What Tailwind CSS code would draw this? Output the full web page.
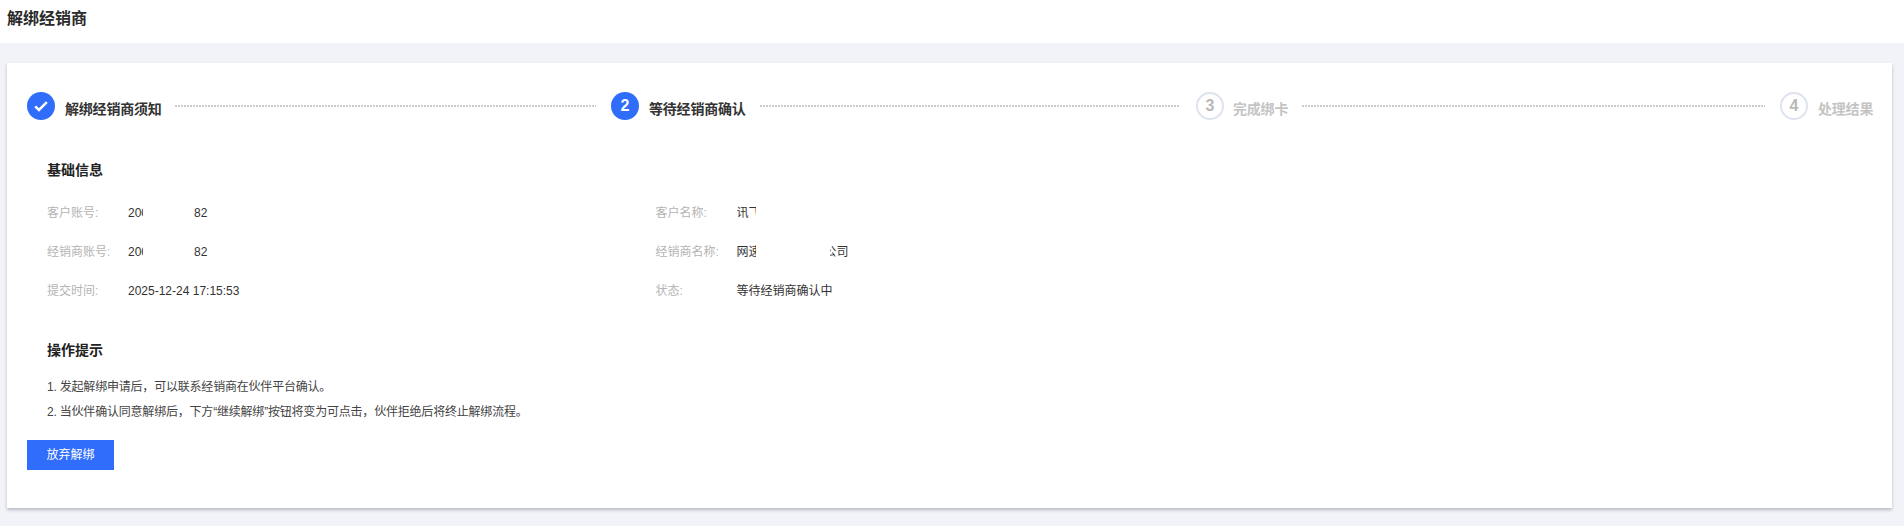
<!doctype html>
<html lang="zh-CN">
<head>
<meta charset="utf-8">
<script src="https://cdn.jsdelivr.net/npm/@tailwindcss/browser@4"></script>
</head>
<body class="h-[526px] overflow-hidden bg-[#f2f3f8] font-['Liberation_Sans','Noto_Sans_CJK_SC',sans-serif] text-[#1f1f1f]">
<header class="flex h-[43px] items-center bg-white pb-[5px] pl-[7px] text-base font-bold text-[#2a2a2a]">解绑经销商</header>
<main class="mx-[7px] mt-5 h-[445px] w-[1885px] bg-white px-5 pt-[29px] shadow-[0_2px_3px_0_rgba(54,58,80,0.3)]">
  <div class="flex h-7 items-center">
    <div class="flex w-[584px] shrink-0 items-center">
      <span class="flex size-7 shrink-0 items-center justify-center rounded-full bg-[#2f6dfa]">
        <svg width="16" height="16" viewBox="0 0 16 16" fill="none"><path d="M2.2 8.4 6 12 13.8 4.2" stroke="#fff" stroke-width="2.5"/></svg>
      </span>
      <span class="ml-[10px] mt-[6px] text-sm leading-5 font-bold tracking-[-0.2px] whitespace-nowrap text-[#333]">解绑经销商须知</span>
      <span class="ml-[13px] mr-[15px] h-[2px] flex-1 bg-[repeating-linear-gradient(90deg,#cccccc_0_2px,transparent_2px_3px)]"></span>
    </div>
    <div class="flex w-[585px] shrink-0 items-center">
      <span class="flex size-7 shrink-0 items-center justify-center rounded-full bg-[#2f6dfa] text-base font-bold text-white">2</span>
      <span class="ml-[10px] mt-[6px] text-sm leading-5 font-bold tracking-[-0.2px] whitespace-nowrap text-[#333]">等待经销商确认</span>
      <span class="ml-[14px] mr-[16px] h-[2px] flex-1 bg-[repeating-linear-gradient(90deg,#cccccc_0_2px,transparent_2px_3px)]"></span>
    </div>
    <div class="flex w-[584px] shrink-0 items-center">
      <span class="flex size-7 shrink-0 items-center justify-center rounded-full border-2 border-[#dfe3ee] text-base font-bold text-[#b8b8b8]">3</span>
      <span class="ml-[9px] mt-[6px] text-sm leading-5 font-bold tracking-[-0.2px] whitespace-nowrap text-[#c4c4c4]">完成绑卡</span>
      <span class="ml-[14px] mr-[15px] h-[2px] flex-1 bg-[repeating-linear-gradient(90deg,#cccccc_0_2px,transparent_2px_3px)]"></span>
    </div>
    <div class="flex shrink-0 items-center">
      <span class="flex size-7 shrink-0 items-center justify-center rounded-full border-2 border-[#dfe3ee] text-base font-bold text-[#b8b8b8]">4</span>
      <span class="ml-[10px] mt-[6px] text-sm leading-5 font-bold tracking-[-0.2px] whitespace-nowrap text-[#c4c4c4]">处理结果</span>
    </div>
  </div>

  <section class="pl-5">
    <h2 class="mt-[40px] text-sm leading-5 font-bold text-[#222]">基础信息</h2>
    <dl class="mt-[13px] grid w-[1000px] grid-cols-[608.5px_1fr] text-xs">
      <div class="flex h-[39px] items-center">
        <dt class="w-[81px] text-[#b4b4b4]">客户账号:</dt>
        <dd class="flex text-[#333]"><span class="w-[15px] overflow-hidden whitespace-nowrap">200</span><span class="ml-[51px]">82</span></dd>
      </div>
      <div class="flex h-[39px] items-center">
        <dt class="w-[81px] text-[#b4b4b4]">客户名称:</dt>
        <dd class="flex text-[#333]"><span class="w-[19px] overflow-hidden whitespace-nowrap">讯飞</span></dd>
      </div>
      <div class="flex h-[39px] items-center">
        <dt class="w-[81px] text-[#b4b4b4]">经销商账号:</dt>
        <dd class="flex text-[#333]"><span class="w-[15px] overflow-hidden whitespace-nowrap">200</span><span class="ml-[51px]">82</span></dd>
      </div>
      <div class="flex h-[39px] items-center">
        <dt class="w-[81px] text-[#b4b4b4]">经销商名称:</dt>
        <dd class="flex text-[#333]"><span class="w-[19px] overflow-hidden whitespace-nowrap">网速</span><span class="ml-[74px] flex w-[19px] justify-end overflow-hidden whitespace-nowrap"><span class="shrink-0">公司</span></span></dd>
      </div>
      <div class="flex h-[39px] items-center">
        <dt class="w-[81px] text-[#b4b4b4]">提交时间:</dt>
        <dd class="text-[#333]">2025-12-24 17:15:53</dd>
      </div>
      <div class="flex h-[39px] items-center">
        <dt class="w-[81px] text-[#b4b4b4]">状态:</dt>
        <dd class="text-[#333]">等待经销商确认中</dd>
      </div>
    </dl>
    <h2 class="mt-[30px] text-sm leading-5 font-bold text-[#222]">操作提示</h2>
    <ol class="mt-[15px] text-xs leading-[25px] tracking-[-0.2px] text-[#444]">
      <li>1. 发起解绑申请后，可以联系经销商在伙伴平台确认。</li>
      <li>2. 当伙伴确认同意解绑后，下方“继续解绑”按钮将变为可点击，伙伴拒绝后将终止解绑流程。</li>
    </ol>
  </section>
  <button class="mt-[15px] block h-[30px] w-[87px] bg-[#2f6dfa] text-xs text-white">放弃解绑</button>
</main>
</body>
</html>
